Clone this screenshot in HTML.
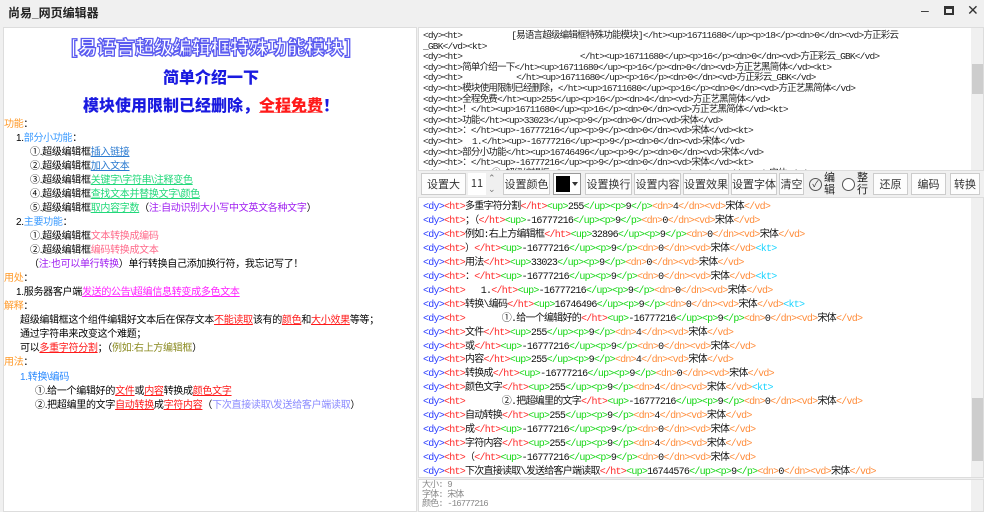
<!DOCTYPE html>
<html><head><meta charset="utf-8"><style>
*{margin:0;padding:0;box-sizing:border-box}
body{width:984px;height:512px;background:#f0f0f0;position:relative;overflow:hidden;font-family:"Liberation Sans","Noto Sans CJK SC",sans-serif}
.title{position:absolute;left:8px;top:4px;font-size:12px;font-weight:bold;color:#222}
.ctl{position:absolute;top:2px;font-size:14px;color:#333}
#left{position:absolute;left:3px;top:27px;width:414px;height:485px;background:#fff;border:1px solid #ddd;font-family:"Liberation Sans","Noto Sans CJK SC",sans-serif;font-size:10px;letter-spacing:-0.3px;line-height:14.3px;color:#000}
.ln{position:absolute;white-space:nowrap}
.big{font-family:"Noto Sans CJK SC",sans-serif;font-weight:900;text-align:center;width:414px;left:0;letter-spacing:0}
u{text-decoration:underline}
.box{position:absolute;background:#fff;border:1px solid #ddd;overflow:hidden}
.mono{font-family:"Liberation Mono","Noto Sans CJK SC",monospace;white-space:pre}
#top .mono{font-size:9.5px;letter-spacing:-0.8px;line-height:10.6px;color:#222}
#ed .mono{font-size:10px;letter-spacing:-0.75px;line-height:13.95px;color:#111}
.b{color:#2a3cff}.r{color:#ff2a2a}.g{color:#16d616}.o{color:#ff8c3a}.c{color:#1ad4ff}
.btn{position:absolute;top:173px;height:22px;background:#fdfdfd;border:1px solid #ccc;font-size:11px;color:#333;text-align:center;line-height:20px;font-family:"Noto Sans CJK SC",sans-serif}
.sb{position:absolute;width:13px;background:#f0f0f0}
</style></head><body>
<div class="title">尚易_网页编辑器</div>
<div class="ctl" style="left:921px">–</div>
<div class="ctl" style="left:944px;top:6px;width:10px;height:9px;border:2px solid #333;border-top-width:3px"></div>
<div class="ctl" style="left:967px">✕</div>

<div id="left">
<div class="ln big" style="top:8px;font-size:19px;line-height:22px;color:#fff;-webkit-text-stroke:1.3px #5a5af0">[易语言超级编辑框特殊功能模块]</div>
<div class="ln big" style="top:38px;font-size:16px;line-height:20px;color:#1a1ae0">简单介绍一下</div>
<div class="ln big" style="top:66px;font-size:16px;line-height:20px;color:#1a1ae0">模块使用限制已经删除，<u style="color:#ff1a1a;text-decoration-color:#ff8080">全程免费</u>！</div>
<div class="ln" style="top:90px;left:0"><span style="color:#ff9a2a">功能</span>：</div>
<div class="ln" style="top:104px;left:12px">1.<span style="color:#3a9aff">部分小功能</span>：</div>
<div class="ln" style="top:118px;left:26px">①.超级编辑框<u style="color:#2a7ad0">插入链接</u></div>
<div class="ln" style="top:132px;left:26px">②.超级编辑框<u style="color:#2a7ad0">加入文本</u></div>
<div class="ln" style="top:146px;left:26px">③.超级编辑框<u style="color:#22d87a">关键字\字符串\注释变色</u></div>
<div class="ln" style="top:160px;left:26px">④.超级编辑框<u style="color:#22d87a">查找文本并替换文字\颜色</u></div>
<div class="ln" style="top:174px;left:26px">⑤.超级编辑框<u style="color:#22d87a">取内容字数</u>（<span style="color:#a020f0">注:自动识别大小写中文英文各种文字</span>）</div>
<div class="ln" style="top:188px;left:12px">2.<span style="color:#3a9aff">主要功能</span>：</div>
<div class="ln" style="top:202px;left:26px">①.超级编辑框<span style="color:#ff6a8a">文本转换成编码</span></div>
<div class="ln" style="top:216px;left:26px">②.超级编辑框<span style="color:#ff6a8a">编码转换成文本</span></div>
<div class="ln" style="top:230px;left:25px">（<span style="color:#a020f0">注:也可以单行转换</span>）单行转换自己添加换行符，我忘记写了！</div>
<div class="ln" style="top:244px;left:0"><span style="color:#ff9a2a">用处</span>：</div>
<div class="ln" style="top:258px;left:12px">1.服务器客户端<u style="color:#ff20ff">发送的公告\超编信息转变成多色文本</u></div>
<div class="ln" style="top:272px;left:0"><span style="color:#ff9a2a">解释</span>：</div>
<div class="ln" style="top:286px;left:16px">超级编辑框这个组件编辑好文本后在保存文本<u style="color:#ff1a1a">不能读取</u>该有的<u style="color:#ff1a1a">颜色</u>和<u style="color:#ff1a1a">大小效果</u>等等；</div>
<div class="ln" style="top:300px;left:16px">通过字符串来改变这个难题；</div>
<div class="ln" style="top:314px;left:16px">可以<u style="color:#ff1a1a">多重字符分割</u>；（<span style="color:#8a8a20">例如:右上方编辑框</span>）</div>
<div class="ln" style="top:328px;left:0"><span style="color:#ff9a2a">用法</span>：</div>
<div class="ln" style="top:343px;left:16px;color:#2a8aff">1.转换\编码</div>
<div class="ln" style="top:357px;left:31px">①.给一个编辑好的<u style="color:#ff1a1a">文件</u>或<u style="color:#ff1a1a">内容</u>转换成<u style="color:#ff1a1a">颜色文字</u></div>
<div class="ln" style="top:371px;left:31px">②.把超编里的文字<u style="color:#ff1a1a">自动转换</u>成<u style="color:#ff1a1a">字符内容</u>（<span style="color:#8a8aff">下次直接读取\发送给客户端读取</span>）</div>
</div>

<div id="top" class="box" style="left:418px;top:27px;width:566px;height:144px;padding:3px 0 0 4px">
<div class="mono">&lt;dy&gt;&lt;ht&gt;          [易语言超级编辑框特殊功能模块]&lt;/ht&gt;&lt;up&gt;16711680&lt;/up&gt;&lt;p&gt;18&lt;/p&gt;&lt;dn&gt;0&lt;/dn&gt;&lt;vd&gt;方正彩云
_GBK&lt;/vd&gt;&lt;kt&gt;
&lt;dy&gt;&lt;ht&gt;                        &lt;/ht&gt;&lt;up&gt;16711680&lt;/up&gt;&lt;p&gt;16&lt;/p&gt;&lt;dn&gt;0&lt;/dn&gt;&lt;vd&gt;方正彩云_GBK&lt;/vd&gt;
&lt;dy&gt;&lt;ht&gt;简单介绍一下&lt;/ht&gt;&lt;up&gt;16711680&lt;/up&gt;&lt;p&gt;16&lt;/p&gt;&lt;dn&gt;0&lt;/dn&gt;&lt;vd&gt;方正艺黑简体&lt;/vd&gt;&lt;kt&gt;
&lt;dy&gt;&lt;ht&gt;           &lt;/ht&gt;&lt;up&gt;16711680&lt;/up&gt;&lt;p&gt;16&lt;/p&gt;&lt;dn&gt;0&lt;/dn&gt;&lt;vd&gt;方正彩云_GBK&lt;/vd&gt;
&lt;dy&gt;&lt;ht&gt;模块使用限制已经删除，&lt;/ht&gt;&lt;up&gt;16711680&lt;/up&gt;&lt;p&gt;16&lt;/p&gt;&lt;dn&gt;0&lt;/dn&gt;&lt;vd&gt;方正艺黑简体&lt;/vd&gt;
&lt;dy&gt;&lt;ht&gt;全程免费&lt;/ht&gt;&lt;up&gt;255&lt;/up&gt;&lt;p&gt;16&lt;/p&gt;&lt;dn&gt;4&lt;/dn&gt;&lt;vd&gt;方正艺黑简体&lt;/vd&gt;
&lt;dy&gt;&lt;ht&gt;！&lt;/ht&gt;&lt;up&gt;16711680&lt;/up&gt;&lt;p&gt;16&lt;/p&gt;&lt;dn&gt;0&lt;/dn&gt;&lt;vd&gt;方正艺黑简体&lt;/vd&gt;&lt;kt&gt;
&lt;dy&gt;&lt;ht&gt;功能&lt;/ht&gt;&lt;up&gt;33023&lt;/up&gt;&lt;p&gt;9&lt;/p&gt;&lt;dn&gt;0&lt;/dn&gt;&lt;vd&gt;宋体&lt;/vd&gt;
&lt;dy&gt;&lt;ht&gt;：&lt;/ht&gt;&lt;up&gt;-16777216&lt;/up&gt;&lt;p&gt;9&lt;/p&gt;&lt;dn&gt;0&lt;/dn&gt;&lt;vd&gt;宋体&lt;/vd&gt;&lt;kt&gt;
&lt;dy&gt;&lt;ht&gt;  1.&lt;/ht&gt;&lt;up&gt;-16777216&lt;/up&gt;&lt;p&gt;9&lt;/p&gt;&lt;dn&gt;0&lt;/dn&gt;&lt;vd&gt;宋体&lt;/vd&gt;
&lt;dy&gt;&lt;ht&gt;部分小功能&lt;/ht&gt;&lt;up&gt;16746496&lt;/up&gt;&lt;p&gt;9&lt;/p&gt;&lt;dn&gt;0&lt;/dn&gt;&lt;vd&gt;宋体&lt;/vd&gt;
&lt;dy&gt;&lt;ht&gt;：&lt;/ht&gt;&lt;up&gt;-16777216&lt;/up&gt;&lt;p&gt;9&lt;/p&gt;&lt;dn&gt;0&lt;/dn&gt;&lt;vd&gt;宋体&lt;/vd&gt;&lt;kt&gt;
&lt;dy&gt;&lt;ht&gt;      ①.超级编辑框&lt;/ht&gt;&lt;up&gt;-16777216&lt;/up&gt;&lt;p&gt;9&lt;/p&gt;&lt;dn&gt;0&lt;/dn&gt;&lt;vd&gt;宋体&lt;/vd&gt;</div>
<div class="sb" style="left:552px;top:0;height:144px"></div>
<div style="position:absolute;left:553px;top:36px;width:11px;height:30px;background:#cdcdcd"></div>
</div>

<div class="btn" style="left:421px;width:45px">设置大小</div>
<div class="btn" style="left:468px;width:18px;border:none;background:#fff">11</div>
<div style="position:absolute;left:488px;top:173px;font-size:9px;color:#777;line-height:11px">⌃<br>⌄</div>
<div class="btn" style="left:503px;width:47px">设置颜色</div>
<div style="position:absolute;left:553px;top:173px;width:28px;height:22px;border:1px solid #999;background:#fff"><div style="position:absolute;left:2px;top:2px;width:14px;height:16px;background:#000"></div><div style="position:absolute;left:18px;top:8px;border-left:3px solid transparent;border-right:3px solid transparent;border-top:4px solid #333"></div></div>
<div class="btn" style="left:585px;width:47px">设置换行</div>
<div class="btn" style="left:634px;width:47px">设置内容</div>
<div class="btn" style="left:683px;width:46px">设置效果</div>
<div class="btn" style="left:731px;width:46px">设置字体</div>
<div class="btn" style="left:779px;width:25px">清空</div>
<div style="position:absolute;left:809px;top:178px;width:13px;height:13px;border:1px solid #555;border-radius:50%;font-size:9px;line-height:11px;text-align:center;color:#333">✓</div>
<div style="position:absolute;left:824px;top:172px;font-size:11px;line-height:12px;width:12px;color:#222">编辑</div>
<div style="position:absolute;left:842px;top:178px;width:13px;height:13px;border:1px solid #555;border-radius:50%;background:#fff"></div>
<div style="position:absolute;left:857px;top:172px;font-size:11px;line-height:12px;width:12px;color:#222">整行</div>
<div class="btn" style="left:873px;width:35px">还原</div>
<div class="btn" style="left:911px;width:35px">编码</div>
<div class="btn" style="left:950px;width:30px">转换</div>

<div id="ed" class="box" style="left:418px;top:197px;width:566px;height:281px;padding:3px 0 0 4px">
<div class="mono"><span class="b">&lt;dy&gt;</span><span class="r">&lt;ht&gt;</span>多重字符分割<span class="r">&lt;/ht&gt;</span><span class="g">&lt;up&gt;</span>255<span class="g">&lt;/up&gt;&lt;p&gt;</span>9<span class="g">&lt;/p&gt;</span><span class="o">&lt;dn&gt;</span>4<span class="o">&lt;/dn&gt;&lt;vd&gt;</span>宋体<span class="o">&lt;/vd&gt;</span>
<span class="b">&lt;dy&gt;</span><span class="r">&lt;ht&gt;</span>；（<span class="r">&lt;/ht&gt;</span><span class="g">&lt;up&gt;</span>-16777216<span class="g">&lt;/up&gt;&lt;p&gt;</span>9<span class="g">&lt;/p&gt;</span><span class="o">&lt;dn&gt;</span>0<span class="o">&lt;/dn&gt;&lt;vd&gt;</span>宋体<span class="o">&lt;/vd&gt;</span>
<span class="b">&lt;dy&gt;</span><span class="r">&lt;ht&gt;</span>例如:右上方编辑框<span class="r">&lt;/ht&gt;</span><span class="g">&lt;up&gt;</span>32896<span class="g">&lt;/up&gt;&lt;p&gt;</span>9<span class="g">&lt;/p&gt;</span><span class="o">&lt;dn&gt;</span>0<span class="o">&lt;/dn&gt;&lt;vd&gt;</span>宋体<span class="o">&lt;/vd&gt;</span>
<span class="b">&lt;dy&gt;</span><span class="r">&lt;ht&gt;</span>）<span class="r">&lt;/ht&gt;</span><span class="g">&lt;up&gt;</span>-16777216<span class="g">&lt;/up&gt;&lt;p&gt;</span>9<span class="g">&lt;/p&gt;</span><span class="o">&lt;dn&gt;</span>0<span class="o">&lt;/dn&gt;&lt;vd&gt;</span>宋体<span class="o">&lt;/vd&gt;</span><span class="c">&lt;kt&gt;</span>
<span class="b">&lt;dy&gt;</span><span class="r">&lt;ht&gt;</span>用法<span class="r">&lt;/ht&gt;</span><span class="g">&lt;up&gt;</span>33023<span class="g">&lt;/up&gt;&lt;p&gt;</span>9<span class="g">&lt;/p&gt;</span><span class="o">&lt;dn&gt;</span>0<span class="o">&lt;/dn&gt;&lt;vd&gt;</span>宋体<span class="o">&lt;/vd&gt;</span>
<span class="b">&lt;dy&gt;</span><span class="r">&lt;ht&gt;</span>：<span class="r">&lt;/ht&gt;</span><span class="g">&lt;up&gt;</span>-16777216<span class="g">&lt;/up&gt;&lt;p&gt;</span>9<span class="g">&lt;/p&gt;</span><span class="o">&lt;dn&gt;</span>0<span class="o">&lt;/dn&gt;&lt;vd&gt;</span>宋体<span class="o">&lt;/vd&gt;</span><span class="c">&lt;kt&gt;</span>
<span class="b">&lt;dy&gt;</span><span class="r">&lt;ht&gt;</span>   1.<span class="r">&lt;/ht&gt;</span><span class="g">&lt;up&gt;</span>-16777216<span class="g">&lt;/up&gt;&lt;p&gt;</span>9<span class="g">&lt;/p&gt;</span><span class="o">&lt;dn&gt;</span>0<span class="o">&lt;/dn&gt;&lt;vd&gt;</span>宋体<span class="o">&lt;/vd&gt;</span>
<span class="b">&lt;dy&gt;</span><span class="r">&lt;ht&gt;</span>转换\编码<span class="r">&lt;/ht&gt;</span><span class="g">&lt;up&gt;</span>16746496<span class="g">&lt;/up&gt;&lt;p&gt;</span>9<span class="g">&lt;/p&gt;</span><span class="o">&lt;dn&gt;</span>0<span class="o">&lt;/dn&gt;&lt;vd&gt;</span>宋体<span class="o">&lt;/vd&gt;</span><span class="c">&lt;kt&gt;</span>
<span class="b">&lt;dy&gt;</span><span class="r">&lt;ht&gt;</span>       ①.给一个编辑好的<span class="r">&lt;/ht&gt;</span><span class="g">&lt;up&gt;</span>-16777216<span class="g">&lt;/up&gt;&lt;p&gt;</span>9<span class="g">&lt;/p&gt;</span><span class="o">&lt;dn&gt;</span>0<span class="o">&lt;/dn&gt;&lt;vd&gt;</span>宋体<span class="o">&lt;/vd&gt;</span>
<span class="b">&lt;dy&gt;</span><span class="r">&lt;ht&gt;</span>文件<span class="r">&lt;/ht&gt;</span><span class="g">&lt;up&gt;</span>255<span class="g">&lt;/up&gt;&lt;p&gt;</span>9<span class="g">&lt;/p&gt;</span><span class="o">&lt;dn&gt;</span>4<span class="o">&lt;/dn&gt;&lt;vd&gt;</span>宋体<span class="o">&lt;/vd&gt;</span>
<span class="b">&lt;dy&gt;</span><span class="r">&lt;ht&gt;</span>或<span class="r">&lt;/ht&gt;</span><span class="g">&lt;up&gt;</span>-16777216<span class="g">&lt;/up&gt;&lt;p&gt;</span>9<span class="g">&lt;/p&gt;</span><span class="o">&lt;dn&gt;</span>0<span class="o">&lt;/dn&gt;&lt;vd&gt;</span>宋体<span class="o">&lt;/vd&gt;</span>
<span class="b">&lt;dy&gt;</span><span class="r">&lt;ht&gt;</span>内容<span class="r">&lt;/ht&gt;</span><span class="g">&lt;up&gt;</span>255<span class="g">&lt;/up&gt;&lt;p&gt;</span>9<span class="g">&lt;/p&gt;</span><span class="o">&lt;dn&gt;</span>4<span class="o">&lt;/dn&gt;&lt;vd&gt;</span>宋体<span class="o">&lt;/vd&gt;</span>
<span class="b">&lt;dy&gt;</span><span class="r">&lt;ht&gt;</span>转换成<span class="r">&lt;/ht&gt;</span><span class="g">&lt;up&gt;</span>-16777216<span class="g">&lt;/up&gt;&lt;p&gt;</span>9<span class="g">&lt;/p&gt;</span><span class="o">&lt;dn&gt;</span>0<span class="o">&lt;/dn&gt;&lt;vd&gt;</span>宋体<span class="o">&lt;/vd&gt;</span>
<span class="b">&lt;dy&gt;</span><span class="r">&lt;ht&gt;</span>颜色文字<span class="r">&lt;/ht&gt;</span><span class="g">&lt;up&gt;</span>255<span class="g">&lt;/up&gt;&lt;p&gt;</span>9<span class="g">&lt;/p&gt;</span><span class="o">&lt;dn&gt;</span>4<span class="o">&lt;/dn&gt;&lt;vd&gt;</span>宋体<span class="o">&lt;/vd&gt;</span><span class="c">&lt;kt&gt;</span>
<span class="b">&lt;dy&gt;</span><span class="r">&lt;ht&gt;</span>       ②.把超编里的文字<span class="r">&lt;/ht&gt;</span><span class="g">&lt;up&gt;</span>-16777216<span class="g">&lt;/up&gt;&lt;p&gt;</span>9<span class="g">&lt;/p&gt;</span><span class="o">&lt;dn&gt;</span>0<span class="o">&lt;/dn&gt;&lt;vd&gt;</span>宋体<span class="o">&lt;/vd&gt;</span>
<span class="b">&lt;dy&gt;</span><span class="r">&lt;ht&gt;</span>自动转换<span class="r">&lt;/ht&gt;</span><span class="g">&lt;up&gt;</span>255<span class="g">&lt;/up&gt;&lt;p&gt;</span>9<span class="g">&lt;/p&gt;</span><span class="o">&lt;dn&gt;</span>4<span class="o">&lt;/dn&gt;&lt;vd&gt;</span>宋体<span class="o">&lt;/vd&gt;</span>
<span class="b">&lt;dy&gt;</span><span class="r">&lt;ht&gt;</span>成<span class="r">&lt;/ht&gt;</span><span class="g">&lt;up&gt;</span>-16777216<span class="g">&lt;/up&gt;&lt;p&gt;</span>9<span class="g">&lt;/p&gt;</span><span class="o">&lt;dn&gt;</span>0<span class="o">&lt;/dn&gt;&lt;vd&gt;</span>宋体<span class="o">&lt;/vd&gt;</span>
<span class="b">&lt;dy&gt;</span><span class="r">&lt;ht&gt;</span>字符内容<span class="r">&lt;/ht&gt;</span><span class="g">&lt;up&gt;</span>255<span class="g">&lt;/up&gt;&lt;p&gt;</span>9<span class="g">&lt;/p&gt;</span><span class="o">&lt;dn&gt;</span>4<span class="o">&lt;/dn&gt;&lt;vd&gt;</span>宋体<span class="o">&lt;/vd&gt;</span>
<span class="b">&lt;dy&gt;</span><span class="r">&lt;ht&gt;</span>（<span class="r">&lt;/ht&gt;</span><span class="g">&lt;up&gt;</span>-16777216<span class="g">&lt;/up&gt;&lt;p&gt;</span>9<span class="g">&lt;/p&gt;</span><span class="o">&lt;dn&gt;</span>0<span class="o">&lt;/dn&gt;&lt;vd&gt;</span>宋体<span class="o">&lt;/vd&gt;</span>
<span class="b">&lt;dy&gt;</span><span class="r">&lt;ht&gt;</span>下次直接读取\发送给客户端读取<span class="r">&lt;/ht&gt;</span><span class="g">&lt;up&gt;</span>16744576<span class="g">&lt;/up&gt;&lt;p&gt;</span>9<span class="g">&lt;/p&gt;</span><span class="o">&lt;dn&gt;</span>0<span class="o">&lt;/dn&gt;&lt;vd&gt;</span>宋体<span class="o">&lt;/vd&gt;</span></div>
<div class="sb" style="left:552px;top:0;height:281px"></div>
<div style="position:absolute;left:553px;top:200px;width:11px;height:63px;background:#cdcdcd"></div>
</div>

<div class="box" style="left:418px;top:479px;width:566px;height:33px;padding:1px 0 0 3px">
<div class="mono" style="font-size:9px;letter-spacing:-0.9px;line-height:9.5px;color:#888">大小: 9
字体: 宋体
颜色: -16777216</div>
<div class="sb" style="left:552px;top:0;height:33px"></div>
</div>
</body></html>
